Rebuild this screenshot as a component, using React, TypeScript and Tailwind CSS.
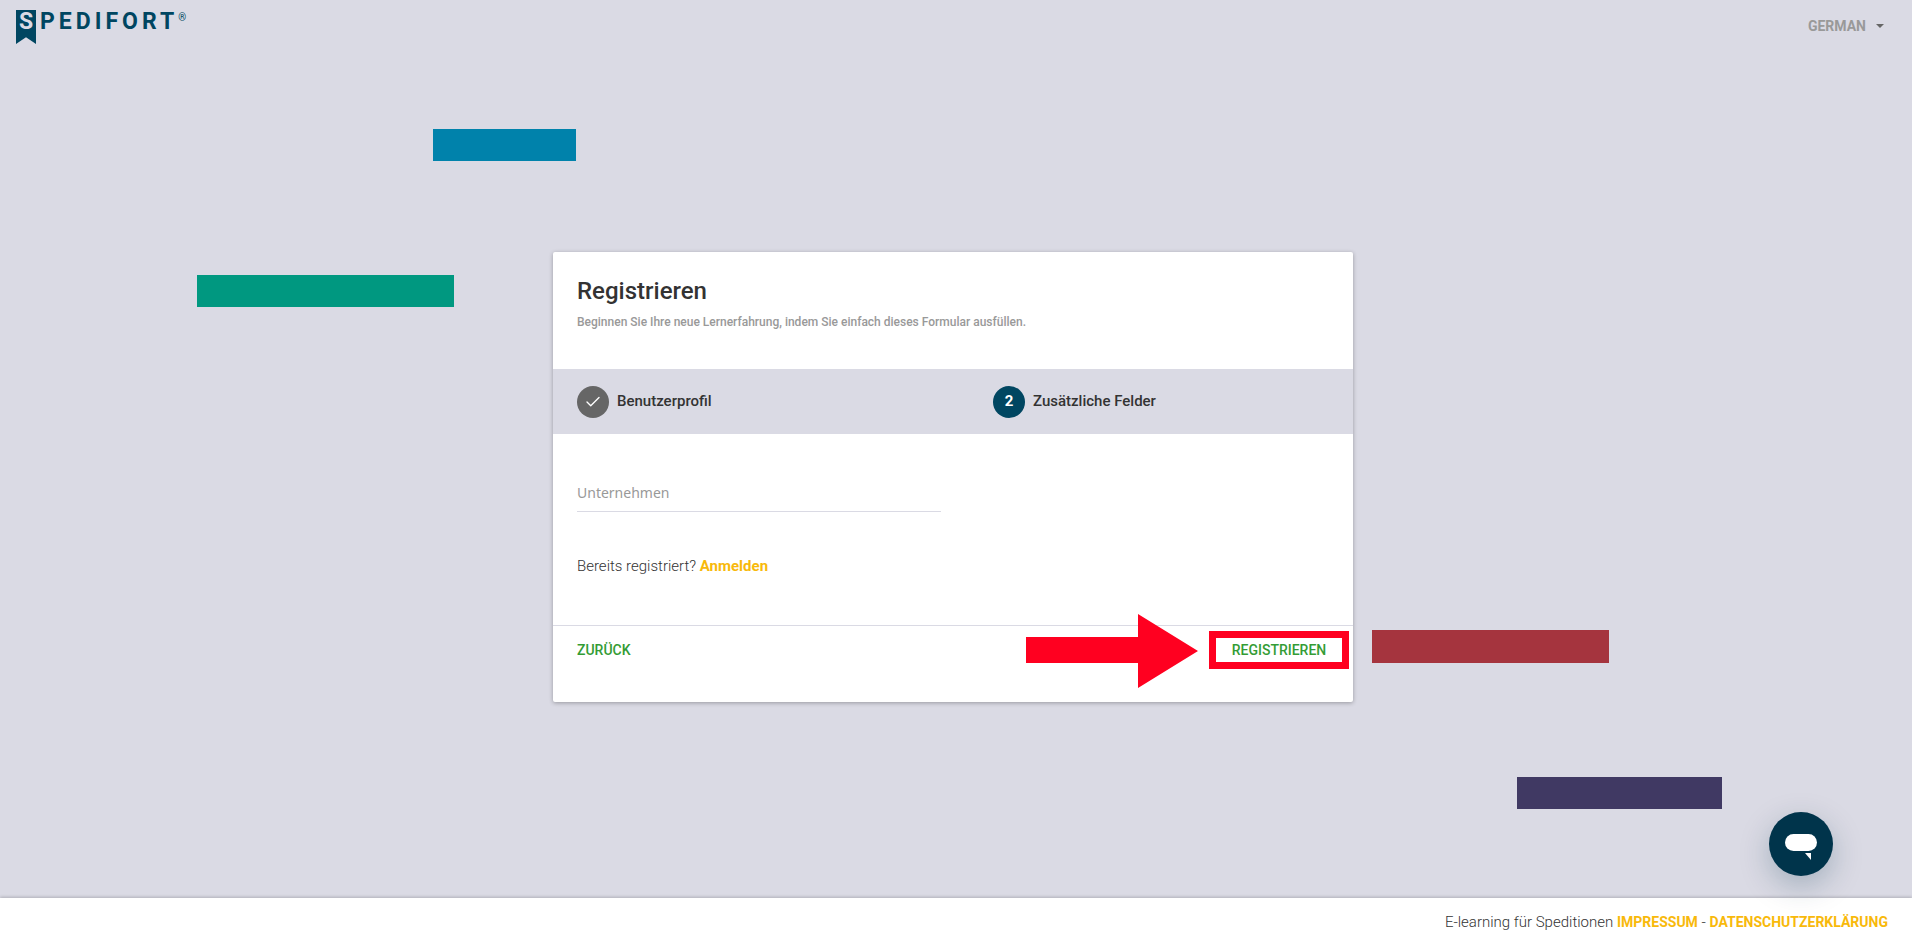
import { Check } from "lucide-react";

function Brand() {
  return (
    <a href="#" aria-label="Spedifort" className="flex items-start text-[#004661]">
      <span className="flex h-[34px] w-5 justify-center bg-current [clip-path:polygon(0_0,100%_0,100%_100%,50%_80%,0_100%)]">
        <span className="text-[23px] leading-6 font-bold text-[#dadae4]">S</span>
      </span>
      <span className="pl-1 text-[23px] leading-6 font-bold tracking-[4px]">PEDIFORT</span>
      <span className="text-[10px] leading-4">®</span>
    </a>
  );
}

function Backdrop() {
  return (
    <svg
      className="absolute inset-0 h-full w-full"
      viewBox="0 0 1912 941"
      preserveAspectRatio="xMidYMid slice"
      aria-hidden="true"
    >
      <rect x="433" y="129" width="143" height="32" fill="#0082ab" />
      <rect x="197" y="275" width="257" height="32" fill="#009880" />
      <rect x="1372" y="630" width="237" height="33" fill="#a5343e" />
      <rect x="1517" y="777" width="205" height="32" fill="#403963" />
    </svg>
  );
}

export default function App() {
  return (
    <div className="relative flex min-h-screen flex-col bg-[#dadae4] font-['Roboto','Liberation_Sans',sans-serif] text-[15px] text-[#333]">
      <Backdrop />
      <header className="relative flex items-start justify-between pt-[10px] pr-7 pl-4">
        <Brand />
        <button type="button" className="flex items-center gap-[10px] pt-1.5 text-sm leading-5 font-bold text-[#999]">
          GERMAN
          <svg width="8" height="4" viewBox="0 0 8 4" fill="#666" aria-hidden="true">
            <path d="M0 0h8L4 4z" />
          </svg>
        </button>
      </header>

      <main className="relative flex flex-1 items-center justify-center pt-3 pr-1.5">
        <form className="w-full max-w-[800px] rounded-xs bg-white shadow-[0_1px_4px_rgba(0,0,0,0.3)]">
          <div className="h-[117px] px-6 pt-6">
            <h1 className="text-2xl leading-[30px] font-medium">Registrieren</h1>
            <p className="pt-1.5 text-xs leading-5 font-medium text-[#999]">
              Beginnen Sie Ihre neue Lernerfahrung, indem Sie einfach dieses Formular ausfüllen.
            </p>
          </div>
          <ol className="grid h-[65px] grid-cols-2 items-center gap-20 bg-[#dadae4] px-6 font-medium">
            <li className="flex items-center gap-2">
              <span className="flex size-8 items-center justify-center rounded-full bg-[#666] text-white">
                <Check size={18} strokeWidth={1.8} />
              </span>
              Benutzerprofil
            </li>
            <li className="flex items-center gap-2">
              <span className="flex size-8 items-center justify-center rounded-full bg-[#004661] font-bold text-white">2</span>
              Zusätzliche Felder
            </li>
          </ol>
          <div className="h-[191px] px-6 pt-11">
            <input
              aria-label="Unternehmen"
              placeholder="Unternehmen"
              className="block h-[34px] w-full max-w-[364px] border-b border-[#dadae4] pb-1 font-['Noto_Sans',sans-serif] text-sm outline-none placeholder:text-[#999]"
            />
            <p className="pt-11 leading-5 font-light">
              Bereits registriert? <a href="#" className="font-bold text-[#f8b90b]">Anmelden</a>
            </p>
          </div>
          <div className="relative flex h-[77px] items-start justify-between border-t border-[#dadae4] pt-[5px] pr-1 pl-6 text-sm font-medium text-[#339c35]">
            <button type="button" className="h-[38px]">ZURÜCK</button>
            <button type="submit" className="h-[38px] w-[140px] border-[7px] border-[#ff0020]">REGISTRIEREN</button>
            <svg className="absolute -top-3 right-[155px]" width="172" height="74" viewBox="0 0 172 74" fill="#ff0020" aria-hidden="true">
              <path d="M0 23h112V0l60 37-60 37V49H0z" />
            </svg>
          </div>
        </form>
      </main>

      <footer className="relative flex h-[43px] items-center justify-end bg-white pr-6 shadow-[0_-1px_3px_rgba(0,0,0,0.2)]">
        <p className="pt-1.5 font-light">
          E-learning für Speditionen <a href="#" className="text-sm font-bold text-[#f8b90b]">IMPRESSUM</a> -{" "}
          <a href="#" className="text-sm font-bold text-[#f8b90b]">DATENSCHUTZERKLÄRUNG</a>
        </p>
      </footer>

      <button
        type="button"
        aria-label="Chat"
        className="fixed right-[79px] bottom-[65px] size-16 rounded-full bg-[#00344b] shadow-[0_10px_30px_rgba(0,52,75,0.25)]"
      >
        <svg viewBox="0 0 64 64" fill="white" aria-hidden="true">
          <rect x="16" y="22" width="32" height="17" rx="8.5" />
          <path d="M36 41h6v7z" />
        </svg>
      </button>
    </div>
  );
}
